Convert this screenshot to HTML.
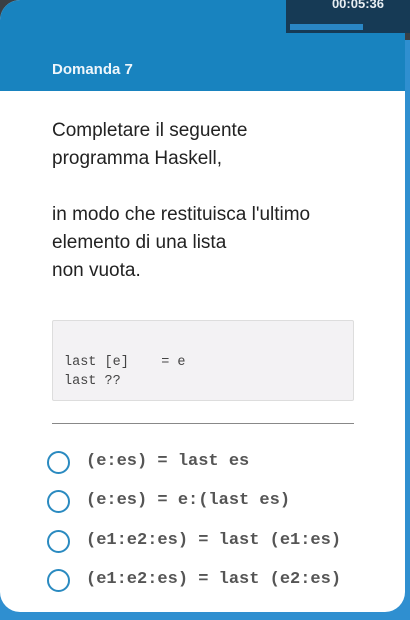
<!DOCTYPE html>
<html><head><style>
body{margin:0;width:410px;height:620px;background:#3a3f44;position:relative;overflow:hidden;font-family:"Liberation Sans",sans-serif}
.bgb{position:absolute;left:0;top:40px;width:410px;height:580px;background:#2f8fd0}
.card{position:absolute;left:0;top:0;width:405px;height:612px;background:#fff;border-radius:20px;overflow:hidden}
.hdr{position:absolute;left:0;top:0;width:405px;height:91px;background:#1883bf}
.hdr span{position:absolute;left:52px;top:61px;color:#eef6fb;font-weight:bold;font-size:15px}
.timer{position:absolute;left:286px;top:0;width:124px;height:33px;background:#163a55}
.timer b{position:absolute;right:26px;top:-4px;color:#e8eef2;font-size:13px}
.bar{position:absolute;left:4px;top:24px;width:73px;height:6px;background:#2a86c4}
.q{position:absolute;left:52px;top:117px;font-size:19px;line-height:28px;color:#222}
.code{position:absolute;left:52px;top:320px;width:300px;height:79px;background:#f3f2f4;border:1px solid #ddd;border-radius:2px}
.code pre{margin:0;position:absolute;left:11px;top:32px;font-family:"Liberation Mono",monospace;font-size:13.5px;line-height:19px;color:#444}
.hr{position:absolute;left:52px;top:423px;width:302px;height:1px;background:#888}
.opt{position:absolute;left:47px;height:22px;font-family:"Liberation Mono",monospace;font-size:17px;font-weight:bold;color:#555;white-space:pre}
.opt i{position:absolute;left:0;top:0;width:19px;height:19px;border:2.5px solid #2a8ac0;border-radius:50%}
.opt span{position:absolute;left:39px;top:1px}
</style></head><body>
<div class="bgb"></div>
<div class="card">
<div class="hdr"><span>Domanda 7</span></div>
<div class="q">Completare il seguente<br>programma Haskell,<br><br>in modo che restituisca l'ultimo<br>elemento di una lista<br>non vuota.</div>
<div class="code"><pre>last [e]    = e
last ??</pre></div>
<div class="hr"></div>
<div class="opt" style="top:451px"><i></i><span>(e:es) = last es</span></div>
<div class="opt" style="top:490px"><i></i><span>(e:es) = e:(last es)</span></div>
<div class="opt" style="top:530px"><i></i><span>(e1:e2:es) = last (e1:es)</span></div>
<div class="opt" style="top:569px"><i></i><span>(e1:e2:es) = last (e2:es)</span></div>
</div>
<div class="timer"><b>00:05:36</b><div class="bar"></div></div>
</body></html>
